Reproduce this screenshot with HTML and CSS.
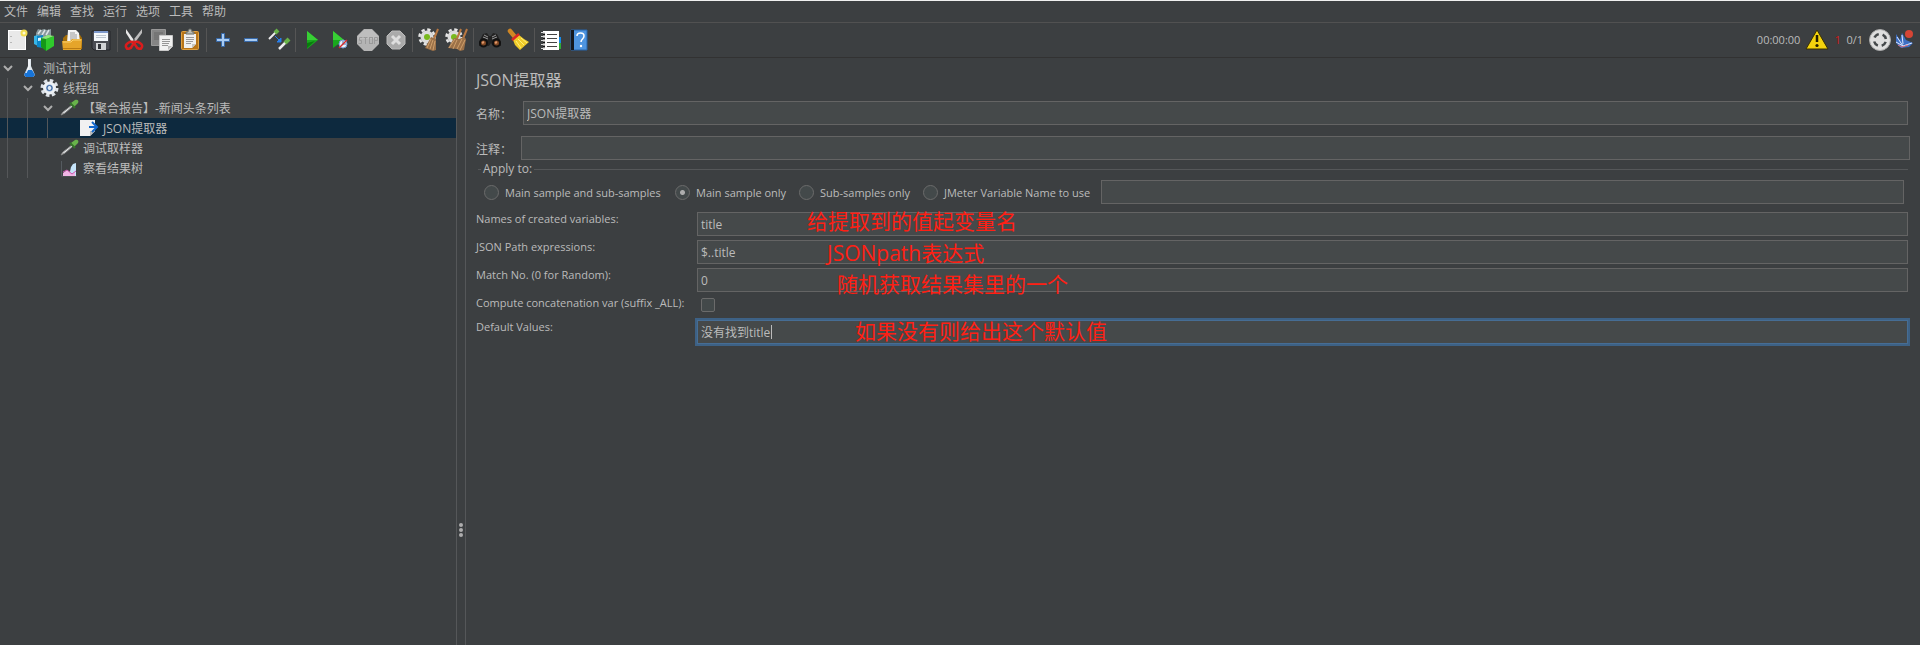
FILE: index.html
```html
<!DOCTYPE html>
<html lang="zh-CN">
<head>
    <meta charset="UTF-8" />
    <meta name="viewport" content="width=device-width, initial-scale=1.0"/>
    <title>Apache JMeter</title>
    <link rel="stylesheet" href="styles.css">
</head>
<body>
    <nav class="menu-bar">
        <button type="button">文件</button>
        <button type="button">编辑</button>
        <button type="button">查找</button>
        <button type="button">运行</button>
        <button type="button">选项</button>
        <button type="button">工具</button>
        <button type="button">帮助</button>
    </nav>

    <header class="toolbar">
        <button type="button" aria-label="New">
            <svg viewBox="0 0 24 24"><rect x="3.500" y="2.500" width="17" height="19" fill="#e9e9e9" stroke="#fff"/><path d="M6 8v1M6 14v1" stroke="#888"/><circle cx="19" cy="5" r="3.500" fill="#f0dc50"/><circle cx="19" cy="5" r="1.500" fill="#fffbd0"/></svg>
        </button>
        <button type="button" aria-label="Templates">
            <svg viewBox="0 0 24 24"><path d="M3 5l2-4 3 1 3-1 3 1 4-1v8H3z" fill="#87979c"/><path d="M5 6l3-4M9 7l3-5M13 7l3-5" stroke="#dce3e5" stroke-width="1.500"/><path d="M1 8l4-1v11l-4-2z" fill="#38b6e8"/><path d="M4 8l6-1v13l-6-1z" fill="#0c86c8"/><path d="M5 10l3-.5v3L5 13z" fill="#d8f2ff"/><path d="M8 10l5 1v12l-5-4z" fill="#159818"/><path d="M13 11l8-3v10l-8 5z" fill="#2fca2c"/><path d="M8 10l7-3 6 1-8 3z" fill="#8eea78"/></svg>
        </button>
        <button type="button" aria-label="Open">
            <svg viewBox="0 0 24 24"><path d="M2 10l3-3h14l2 3v11H2z" fill="#a26c08"/><path d="M7 2h8l3 3 1 9-13 1z" fill="#f4f4f4"/><path d="M9 5h5M9 7h7M9 9h7M9 11h7" stroke="#999"/><path d="M1 13h8l2-2h10l-1 11H2z" fill="#e5a52a"/><path d="M2 14h8l2-2h8" fill="none" stroke="#f9d271"/><path d="M2 20.500h18" stroke="#bb7c13"/></svg>
        </button>
        <button type="button" aria-label="Save">
            <svg viewBox="0 0 24 24"><path d="M3 3h18v19H5l-2-2z" fill="#4b4d54" stroke="#25262a"/><path d="M5 3h14v10H5z" fill="#f4f8fc"/><path d="M5 3h14v2H5z" fill="#7c98cc"/><path d="M7 7.500h10M7 9.500h10" stroke="#bdc6d1"/><path d="M7 15h10v7H7z" fill="#d1d3d6"/><path d="M9 16h3v5H9z" fill="#303238"/></svg>
        </button>
        <span class="separator"></span>
        <button type="button" aria-label="Cut">
            <svg viewBox="0 0 24 24"><path d="M4 1l10 14-3 1L4 5z" fill="#e8e8e8"/><path d="M20 1L9 15l3 1 8-11z" fill="#bdbdbd"/><circle cx="12" cy="12" r="1" fill="#666"/><path d="M11 14c-3-1-8 2-7 5s5 2 6-1l2-3zM13 14c3-1 8 2 7 5s-5 2-6-1l-2-3z" fill="none" stroke="#d91c1c" stroke-width="2.500"/></svg>
        </button>
        <button type="button" aria-label="Copy">
            <svg viewBox="0 0 24 24"><path d="M1.500 1.500h14v16h-14z" fill="#858585" stroke="#999"/><path d="M4 5h9M4 7h6M4 9h5M4 11h5" stroke="#666"/><path d="M9.500 7.500h13v11l-4 4h-9z" fill="#f1f1f1" stroke="#c9c9c9"/><path d="M12 11.500h8M12 13.500h8M12 15.500h7M12 17.500h6" stroke="#969696"/><path d="M18 22v-4h4" fill="#bbb"/></svg>
        </button>
        <button type="button" aria-label="Paste">
            <svg viewBox="0 0 24 24"><rect x="3.500" y="3.500" width="17" height="18" rx="1" fill="#b87517" stroke="#e0a13f"/><path d="M6 6h12v10l-4 4H6z" fill="#f0f0ee"/><path d="M8 9.500h8M8 11.500h8M8 13.500h7M8 15.500h5" stroke="#999"/><path d="M14 20v-4h4" fill="#c5c5c0"/><path d="M8 6V4h2c0-4 4-4 4 0h2v2z" fill="#babdb6" stroke="#686a65"/></svg>
        </button>
        <span class="separator"></span>
        <button type="button" aria-label="Expand All">
            <svg viewBox="0 0 24 24"><path d="M10.500 5.500h3v5h5v3h-5v5h-3v-5h-5v-3h5z" fill="#a9ccf3" stroke="#3769a9"/></svg>
        </button>
        <button type="button" aria-label="Collapse All">
            <svg viewBox="0 0 24 24"><path d="M5.500 10.500h13v3h-13z" fill="#a9ccf3" stroke="#3769a9"/></svg>
        </button>
        <button type="button" aria-label="Toggle">
            <svg viewBox="0 0 24 24"><path d="M2 11l7-7" stroke="#eee" stroke-width="2"/><path d="M8 5l3-3" stroke="#67b248" stroke-width="4"/><path d="M12 21l7-7" stroke="#eee" stroke-width="2.500"/><path d="M18 15l4-4" stroke="#67b248" stroke-width="4"/><path d="M8 8l5 5M14 10v4h-4z" fill="#287eea" stroke="#287eea"/></svg>
        </button>
        <span class="separator"></span>
        <button type="button" aria-label="Start">
            <svg viewBox="0 0 24 24"><path d="M7 3l11 9L7 21z" fill="#19a81e"/><path d="M7 3l11 9H7z" fill="#38cf35"/><path d="M7 15l8-2-8 7z" fill="#087d0c"/></svg>
        </button>
        <button type="button" aria-label="Start no pauses">
            <svg viewBox="0 0 24 24"><path d="M5 3l11 9-11 8z" fill="#19a81e"/><path d="M5 3l11 9H5z" fill="#38cf35"/><circle cx="15" cy="16" r="4" fill="#e9eef7" stroke="#6f9bd0"/><path d="M15 16v-3M15 16h3" stroke="#4775b2"/><path d="M11 20l8-8" stroke="#d62c2c" stroke-width="1.500"/></svg>
        </button>
        <button type="button" aria-label="Stop" disabled>
            <svg viewBox="0 0 24 24"><path d="M8 1h8l7 7v8l-7 7H8l-7-7V8z" fill="#b4b4b4"/><path d="M8 2h8l6 6v3H2V8z" fill="#bebebe"/><g fill="none" stroke="#9a9a9a"><path d="M6.500 9.500h-3v3h2v3h-3M7.500 9.500h4M9.500 9v7M18.500 16V9.500h3v3h-3"/><rect x="13.500" y="9.500" width="3" height="6"/></g></svg>
        </button>
        <button type="button" aria-label="Shutdown" disabled>
            <svg viewBox="0 0 24 24"><path d="M8 3h8l5 5v8l-5 5H8l-5-5V8z" fill="#aaa" stroke="#bbb"/><path d="M8 8l8 8M16 8l-8 8" stroke="#dedede" stroke-width="3"/></svg>
        </button>
        <span class="separator"></span>
        <button type="button" aria-label="Clear">
            <svg viewBox="0 0 24 24"><circle cx="10" cy="9" r="7.500" fill="none" stroke="#e6e6e6" stroke-width="2.500" stroke-dasharray="3.300 2.590"/><circle cx="10" cy="9" r="6.500" fill="#dcdcdc"/><circle cx="10" cy="9" r="3" fill="#78b91d"/><path d="M21 1l-5 12" stroke="#b97842" stroke-width="2"/><path d="M14 9l5 2v11l-3 1-8-3z" fill="#9c7148"/><path d="M14 11l-4 9M16 12l-3 9M18 13l-2 9" stroke="#cfa06c"/></svg>
        </button>
        <button type="button" aria-label="Clear All">
            <svg viewBox="0 0 24 24"><circle cx="9" cy="9" r="7.500" fill="none" stroke="#e6e6e6" stroke-width="2.500" stroke-dasharray="3.300 2.590"/><circle cx="9" cy="9" r="6.500" fill="#dcdcdc"/><circle cx="9" cy="9" r="3" fill="#78b91d"/><path d="M16 1l-5 12M22 1l-5 12" stroke="#b97842" stroke-width="2"/><path d="M9 10l5 1 5-2 2 2-2 11-4 1-3-2-9-1z" fill="#9c7148"/><path d="M10 11l-6 9M12 12l-4 9M17 11l-5 10M20 12l-5 10" stroke="#cfa06c"/></svg>
        </button>
        <span class="separator"></span>
        <button type="button" aria-label="Search">
            <svg viewBox="0 0 24 24"><path d="M1 14l4-8 4-1 2 3h2l2-3 4 1 4 8v4h-8l-2-3-2 3H1z" fill="#222"/><path d="M6 7l4 2M18 7l-4 2M5 9l5 2M19 9l-5 2" stroke="#999"/><circle cx="5.500" cy="15" r="3.500" fill="#804824" stroke="#111" stroke-width="2"/><circle cx="18.500" cy="15" r="3.500" fill="#804824" stroke="#111" stroke-width="2"/><path d="M4 15l2-1M17 15l2-1" stroke="#df986a" stroke-width="2"/></svg>
        </button>
        <button type="button" aria-label="Reset Search">
            <svg viewBox="0 0 24 24"><path d="M4 3l5 6" stroke="#cf8624" stroke-width="4.500" stroke-linecap="round"/><path d="M7 12l6-5 5 4 5 3-9 8-5-5z" fill="#f0cb29"/><path d="M10 13l5 7M12 11l6 6M15 10l6 5" stroke="#fff078"/><path d="M6 12l7-6" stroke="#d92626" stroke-width="2.500"/></svg>
        </button>
        <span class="separator"></span>
        <button type="button" aria-label="Function Helper">
            <svg viewBox="0 0 24 24"><path d="M19 9h3v6h-3z" fill="#168be8"/><path d="M19 15h3v6h-3z" fill="#2faa38"/><path d="M4 3h16v19H4z" fill="#fff"/><path d="M8 6.500h10M8 10.500h10M8 14.500h10M8 18.500h10" stroke="#444"/><path d="M2 4.500h4M2 8.500h4M2 12.500h4M2 16.500h4M2 20.500h4" stroke="#ddd"/><path d="M4 6.500h2M4 10.500h2M4 14.500h2M4 18.500h2" stroke="#111" stroke-width="2"/></svg>
        </button>
        <button type="button" aria-label="Help">
            <svg viewBox="0 0 24 24"><path d="M4 2h16v20H4z" fill="#4e94df" stroke="#2765aa"/><path d="M4 2h3v20H4z" fill="#14181e"/><path d="M10 8c0-4 7-4 7 0 0 3-3 3-3 6" fill="none" stroke="#fff" stroke-width="1.500"/><circle cx="14" cy="18" r="1.200" fill="#fff"/></svg>
        </button>

        <div class="status">
            <span>00:00:00</span>
            <svg viewBox="0 0 24 24"><path d="M12 2l11 19H1z" fill="#f4d30d" stroke="#393000" stroke-linejoin="round"/><path d="M12 7v7" stroke="#241e00" stroke-width="2.500"/><circle cx="12" cy="17.500" r="1.600" fill="#241e00"/></svg>
            <span class="errors">1</span>
            <span>0/1</span>
            <svg viewBox="0 0 24 24"><circle cx="12" cy="12" r="10.500" fill="#dedede" stroke="#aaa"/><circle cx="12" cy="12" r="6" fill="none" stroke="#44484a" stroke-width="2.500" stroke-dasharray="5.400 4.025" stroke-dashoffset="-2"/></svg>
            <svg viewBox="0 0 24 24"><path d="M3 6l4 6 2-7 4 7 7 3-4 4-8 1-5-5z" fill="#3d6fc4"/><path d="M4 9l6 9M9 7l1 9M3 14l7 4M19 15l-9 3" stroke="#dce8ff"/><path d="M5 17l4 2 6-2" fill="none" stroke="#db7580"/><circle cx="16" cy="6" r="4" fill="#d64535"/></svg>
        </div>
    </header>

    <div class="workspace">
        <aside class="tree" role="tree">
            <div class="node" role="treeitem">
                <svg class="chevron" viewBox="0 0 20 20"><path d="M4 8l4 4 4-4"/></svg>
                <svg viewBox="0 0 20 20"><path d="M8 1h3v7l4 9-2 2H6l-2-2 4-9z" fill="#dfe6ec"/><path d="M7 12h5l3 5-2 2H6l-2-2z" fill="#1774d8"/><path d="M9 2v7l-3 6" fill="none" stroke="#fff"/></svg>
                <span>测试计划</span>
            </div>
            <div class="node" role="treeitem">
                <i class="guide"></i>
                <svg class="chevron" viewBox="0 0 20 20"><path d="M4 8l4 4 4-4"/></svg>
                <svg viewBox="0 0 20 20"><circle cx="9.500" cy="10" r="7.500" fill="none" stroke="#dde2e8" stroke-width="3" stroke-dasharray="3.500 2.390"/><circle cx="9.500" cy="10" r="5" fill="#8fadd2" stroke="#edf1f5" stroke-width="3"/><circle cx="9.500" cy="10" r="2.500" fill="#dfe9f3" stroke="#325f9d"/></svg>
                <span>线程组</span>
            </div>
            <div class="node" role="treeitem">
                <i class="guide"></i><i class="guide"></i>
                <svg class="chevron" viewBox="0 0 20 20"><path d="M4 8l4 4 4-4"/></svg>
                <svg viewBox="0 0 20 20"><path d="M1 17l2-3 9-7 1 1-8 7z" fill="#e4e7e8" stroke="#888"/><path d="M11 5l4-3c3-1 4 1 3 3l-4 4z" fill="#68b44b"/><path d="M10 5l5 5" stroke="#347529" stroke-width="2"/></svg>
                <span>【聚合报告】-新闻头条列表</span>
            </div>
            <div class="node selected" role="treeitem">
                <i class="guide"></i><i class="guide"></i><i class="guide"></i><i class="leaf"></i>
                <svg viewBox="0 0 20 20"><path d="M0 2h15v11l-5 5H0z" fill="#f1f1f1"/><path d="M10 18v-5h5" fill="#bbb"/><path d="M9 9h7M12 4l5 5-5 5" fill="none" stroke="#1267cb" stroke-width="2"/></svg>
                <span>JSON提取器</span>
            </div>
            <div class="node" role="treeitem">
                <i class="guide"></i><i class="guide"></i><i class="leaf"></i>
                <svg viewBox="0 0 20 20"><path d="M1 17l2-3 9-7 1 1-8 7z" fill="#e4e7e8" stroke="#888"/><path d="M11 5l4-3c3-1 4 1 3 3l-4 4z" fill="#68b44b"/><path d="M10 5l5 5" stroke="#347529" stroke-width="2"/></svg>
                <span>调试取样器</span>
            </div>
            <div class="node" role="treeitem">
                <i class="guide"></i><i class="guide"></i><i class="leaf"></i>
                <svg viewBox="0 0 20 20"><path d="M1.500 3v15h15" fill="none" stroke="#555b60"/><path d="M9 18l2-9 2-3 3-1v13z" fill="#c5e4fa"/><path d="M3 18v-3l4-3 3 2 2 2 3-2v4z" fill="#f0b4e4"/><path d="M3 14l4-2 5 4 4-3" fill="none" stroke="#cb58b3"/></svg>
                <span>察看结果树</span>
            </div>
        </aside>

        <div class="divider"><i></i><i></i><i></i></div>

        <main class="panel">
            <h1>JSON提取器</h1>
            <form>
                <div class="row name-row">
                    <label for="name">名称：</label>
                    <input type="text" id="name" value="JSON提取器">
                </div>
                <div class="row">
                    <label for="comment">注释：</label>
                    <input type="text" id="comment">
                </div>

                <fieldset>
                    <legend>Apply to:</legend>
                    <div class="options">
                        <label><input type="radio" name="scope">Main sample and sub-samples</label>
                        <label><input type="radio" name="scope" checked>Main sample only</label>
                        <label><input type="radio" name="scope">Sub-samples only</label>
                        <label><input type="radio" name="scope">JMeter Variable Name to use</label>
                        <input type="text" aria-label="JMeter Variable Name">
                    </div>
                </fieldset>

                <div class="fields">
                    <label for="refNames">Names of created variables:</label>
                    <div class="field">
                        <input type="text" id="refNames" value="title">
                        <span class="note note-names">给提取到的值起变量名</span>
                    </div>
                    <label for="jsonPath">JSON Path expressions:</label>
                    <div class="field">
                        <input type="text" id="jsonPath" value="$..title">
                        <span class="note note-path">JSONpath表达式</span>
                    </div>
                    <label for="matchNo">Match No. (0 for Random):</label>
                    <div class="field">
                        <input type="text" id="matchNo" value="0">
                        <span class="note note-match">随机获取结果集里的一个</span>
                    </div>
                    <label for="concat">Compute concatenation var (suffix _ALL):</label>
                    <div class="field check-field">
                        <input type="checkbox" id="concat">
                    </div>
                    <label for="defaults">Default Values:</label>
                    <div class="field">
                        <input type="text" id="defaults" class="active" value="没有找到title">
                        <span class="caret"></span>
                        <span class="note note-default">如果没有则给出这个默认值</span>
                    </div>
                </div>
            </form>
        </main>
    </div>
</body>
</html>
```
FILE: styles.css
```css
* {
    margin: 0;
    padding: 0;
    box-sizing: border-box;
}

body {
    display: flex;
    flex-direction: column;
    min-height: 100vh;
    border-top: 1px solid #f0f0f0;
    background: #3c3f41;
    color: #bbbbbb;
    font-family: "Open Sans", "Noto Sans CJK SC", sans-serif;
    font-size: 12px;
    line-height: 16px;
}

button,
input {
    font: inherit;
    color: inherit;
}

button {
    border: none;
    background: none;
}

/* Menu and toolbar */
.menu-bar {
    display: flex;
    gap: 9px;
    padding: 3px 4px 2px;
    border-bottom: 1px solid #515151;
}

.toolbar {
    display: flex;
    align-items: center;
    padding: 5px 3px;
    border-bottom: 1px solid #323232;
}

.toolbar button {
    width: 28px;
    height: 24px;
}

.toolbar svg {
    display: block;
    width: 24px;
    height: 24px;
    margin: 0 auto;
}

.separator {
    width: 5px;
    height: 24px;
    background: linear-gradient(#555555, #555555) 2px 0 / 1px 100% no-repeat;
}

.status {
    display: flex;
    align-items: center;
    gap: 5px;
    margin-left: auto;
    font-size: 11px;
}

.toolbar .status svg {
    margin: 0;
}

.toolbar .status svg:last-child {
    margin-left: -4px;
}

.errors {
    width: 7px;
    color: #d01818;
}

.workspace {
    display: flex;
    flex: 1;
}

/* Test plan tree */
.tree {
    flex: 0 0 456px;
}

.node {
    display: flex;
    align-items: center;
    height: 20px;
}

.node svg,
.guide,
.leaf {
    flex: none;
    width: 20px;
    height: 20px;
}

.guide {
    background: linear-gradient(#555759, #555759) 7px 0 / 1px 100% no-repeat;
}

.node span {
    padding: 2px 0 0 3px;
}

.chevron path {
    fill: none;
    stroke: #adadad;
    stroke-width: 2;
}

.selected {
    background: #0d293e;
}

.divider {
    display: flex;
    flex: 0 0 10px;
    flex-direction: column;
    align-items: center;
    justify-content: center;
    gap: 1px;
    padding-top: 356px;
    border: solid #555759;
    border-width: 0 1px;
}

.divider i {
    width: 4px;
    height: 4px;
    border-radius: 50%;
    background: #adadad;
}

/* Extractor settings */
.panel {
    flex: 1;
    min-width: 0;
    padding: 10px;
}

h1 {
    margin-bottom: 9px;
    font-size: 16px;
    font-weight: 400;
    line-height: 24px;
}

input[type="text"] {
    display: block;
    width: 100%;
    height: 24px;
    padding: 0 3px;
    border: 1px solid #646464;
    background: #45494a;
    outline: none;
}

.row {
    display: flex;
    align-items: center;
}

.row label {
    flex: none;
    width: 45px;
    padding-top: 3px;
}

.name-row {
    margin: 0 2px 11px 0;
}

.name-row label {
    width: 47px;
}

fieldset {
    margin: 1px 2px 8px;
    padding: 3px 4px 0 6px;
    border: solid #555759;
    border-width: 1px 0 0;
}

legend {
    margin-left: -3px;
    padding: 0 2px;
}

.options {
    display: grid;
    grid-template-columns: 191px 124px 124px 178px 1fr;
    align-items: center;
}

.options label {
    display: flex;
    align-items: center;
    gap: 6px;
    padding-top: 1px;
    font-size: 11px;
    white-space: nowrap;
}

input[type="radio"],
input[type="checkbox"] {
    appearance: none;
    flex: none;
    width: 15px;
    height: 15px;
    border: 1px solid #6b6b6b;
    border-radius: 50%;
    background: #43494a;
}

input[type="radio"]:checked {
    background: radial-gradient(circle, #adadad 2px, #43494a 3px);
}

.fields {
    display: grid;
    grid-template-columns: 221px 1fr;
    row-gap: 4px;
    margin-right: 2px;
}

.fields label {
    font-size: 11px;
    line-height: 14px;
    white-space: nowrap;
}

.field {
    position: relative;
}

.check-field {
    height: 20px;
    padding: 2px 4px;
}

input[type="checkbox"] {
    display: block;
    width: 14px;
    height: 14px;
    border-radius: 2px;
}

input.active {
    border-color: #466d94;
    box-shadow: 0 0 0 2px #3d6185;
}

.caret {
    position: absolute;
    top: 5px;
    left: 74px;
    width: 1px;
    height: 14px;
    background: #bbbbbb;
}

/* Red remarks laid over the fields */
.note {
    position: absolute;
    color: #ff1f14;
    font-size: 21px;
    line-height: 24px;
    white-space: nowrap;
    pointer-events: none;
}

.note-names {
    top: -3px;
    left: 110px;
}

.note-path {
    top: 1px;
    left: 130px;
}

.note-match {
    top: 4px;
    left: 140px;
}

.note-default {
    top: -1px;
    left: 158px;
}
```
